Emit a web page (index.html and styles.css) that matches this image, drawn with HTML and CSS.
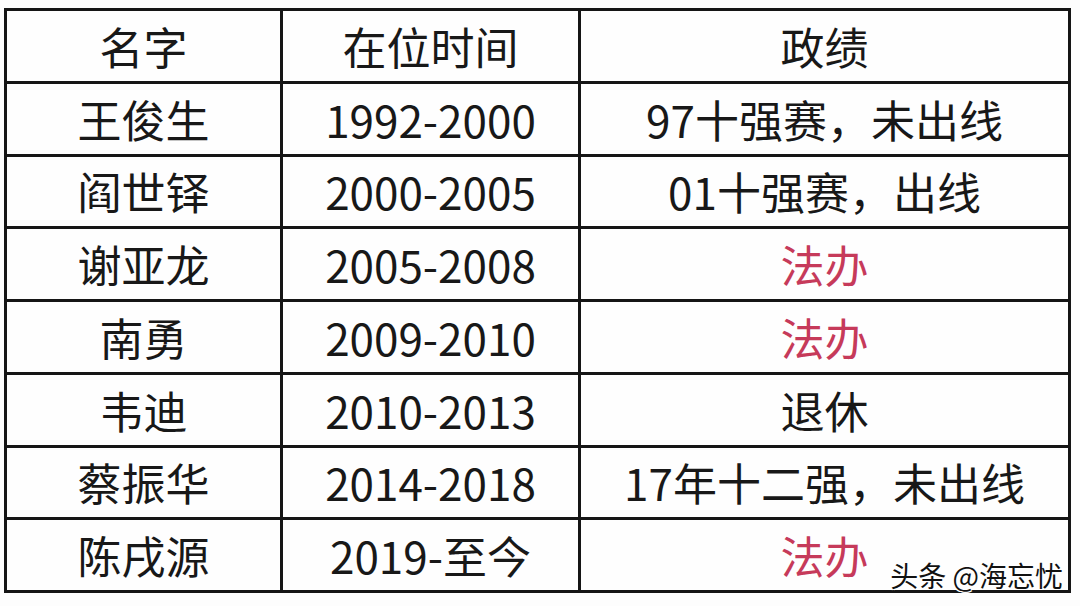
FILE: index.html
```html
<!DOCTYPE html>
<html lang="zh-CN">
<head>
<meta charset="utf-8">
<title>表格</title>
<link rel="stylesheet" href="styles.css">
</head>
<body>
<div class="page">
  <table class="sheet">
    <colgroup>
      <col class="c-name">
      <col class="c-time">
      <col class="c-result">
    </colgroup>
    <tr><td>名字</td><td>在位时间</td><td>政绩</td></tr>
    <tr><td>王俊生</td><td>1992-2000</td><td>97十强赛，未出线</td></tr>
    <tr><td>阎世铎</td><td>2000-2005</td><td>01十强赛，出线</td></tr>
    <tr><td>谢亚龙</td><td>2005-2008</td><td class="red">法办</td></tr>
    <tr><td>南勇</td><td>2009-2010</td><td class="red">法办</td></tr>
    <tr><td>韦迪</td><td>2010-2013</td><td>退休</td></tr>
    <tr><td>蔡振华</td><td>2014-2018</td><td>17年十二强，未出线</td></tr>
    <tr><td>陈戌源</td><td>2019-至今</td><td class="red">法办</td></tr>
  </table>
  <div class="watermark">头条 @海忘忧</div>
</div>
</body>
</html>
```

FILE: styles.css
```css
html, body {
  margin: 0;
  padding: 0;
  background: #fdfdfd;
}
.page {
  position: relative;
  width: 1080px;
  height: 606px;
  overflow: hidden;
  padding: 8px 0 0 4px;
  box-sizing: border-box;
  font-family: "Noto Sans CJK SC", "Noto Sans", sans-serif;
  color: #181818;
}
.sheet {
  border-collapse: collapse;
  table-layout: fixed;
  width: 1064px;
  background: #fefefe;
}
.c-name { width: 276px; }
.c-time { width: 298px; }
.c-result { width: 490px; }
.sheet tr {
  height: 72.75px;
}
.sheet td {
  border: 3px solid #151515;
  padding: 0;
  text-align: center;
  vertical-align: middle;
  font-size: 44px;
  font-weight: 400;
  line-height: 1;
  white-space: nowrap;
}
.sheet td.red {
  color: #c63a5a;
}
.watermark {
  position: absolute;
  right: 17px;
  bottom: 17px;
  font-size: 28px;
  line-height: 1;
  color: #111;
  text-shadow: 1px 1px 0 #fff, -1px -1px 0 #fff, 1px -1px 0 #fff, -1px 1px 0 #fff;
}
```
